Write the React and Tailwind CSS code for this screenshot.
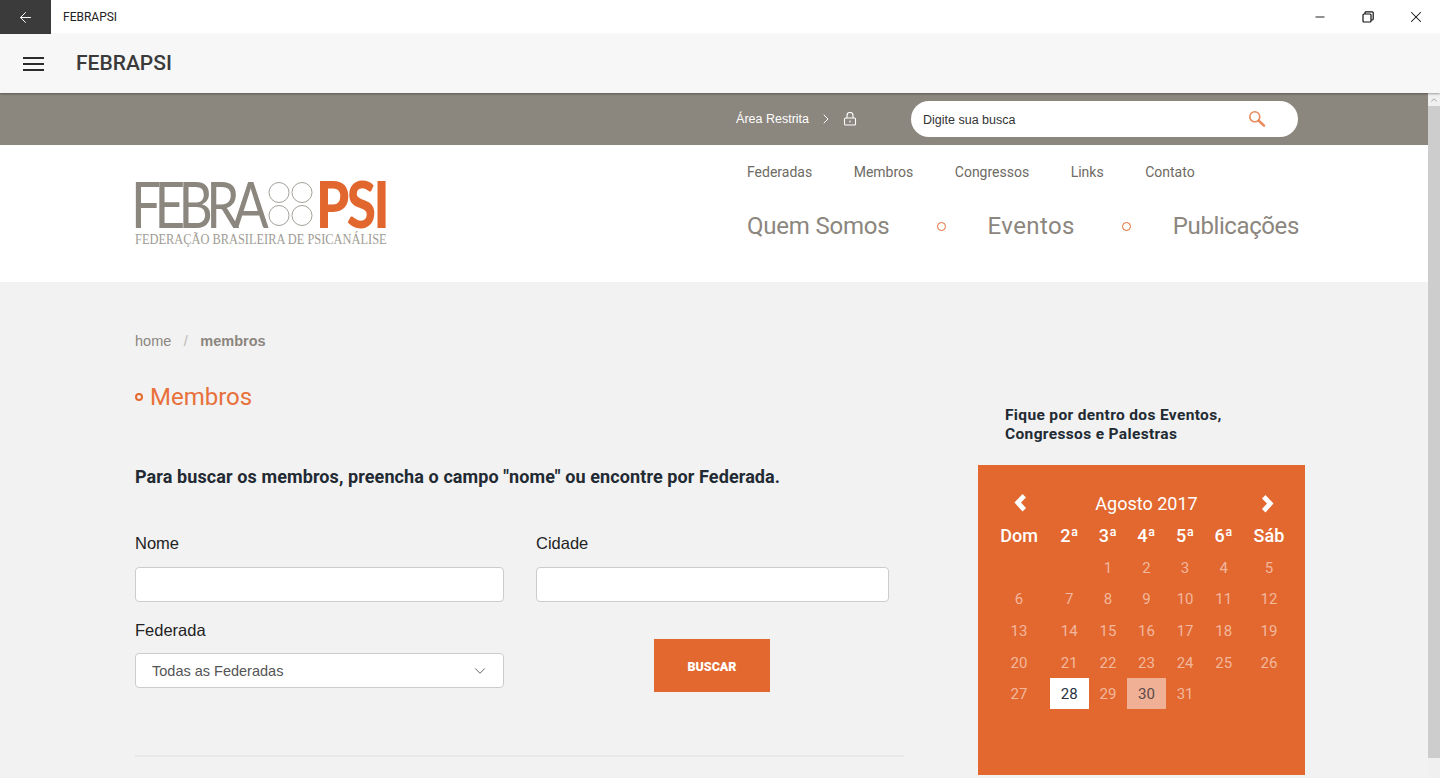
import { ArrowLeft, ChevronDown, ChevronRight, ChevronUp, Minus, X } from "lucide-react";

const titil = "font-['Roboto','Noto_Sans',sans-serif]";
const arial = "font-['Liberation_Sans',Arial,sans-serif]";

const topLinks = ["Federadas", "Membros", "Congressos", "Links", "Contato"];
const weekDays = ["Dom", "2ª", "3ª", "4ª", "5ª", "6ª", "Sáb"];
const weeks = [
    ["", "", 1, 2, 3, 4, 5],
    [6, 7, 8, 9, 10, 11, 12],
    [13, 14, 15, 16, 17, 18, 19],
    [20, 21, 22, 23, 24, 25, 26],
    [27, 28, 29, 30, 31, "", ""],
];

const Dot = ({ className }) => (
    <span className={`inline-block rounded-full border border-[#e56a2f] ${className}`} />
);

const Logo = () => (
    <div className="w-[252px] shrink-0">
        <div className="flex items-center h-[48px]">
            <span className="block w-[133px] font-['Lato',sans-serif] text-[#8b867e] text-[64px] leading-[48px] tracking-[-8px] ml-[-4px] origin-left scale-x-[0.83]">
                FEBRA
            </span>
            <svg width="46" height="46" viewBox="0 0 46 46" className="shrink-0 ml-[4px]">
                <g fill="none" stroke="#a5a19a" strokeWidth="1">
                    <circle cx="11" cy="11.5" r="10" />
                    <circle cx="34" cy="11.5" r="10" />
                    <circle cx="11" cy="34.5" r="10" />
                    <circle cx="34" cy="34.5" r="10" />
                </g>
            </svg>
            <span className="block font-['Lato',sans-serif] text-[#e2672f] text-[64px] leading-[48px] tracking-[-3px] font-black ml-[2px] origin-left scale-x-[0.83]">
                PSI
            </span>
        </div>
        <p className="font-['Liberation_Serif',serif] text-[#a09c95] text-[14px] leading-[14px] mt-[5px] whitespace-nowrap origin-left scale-x-[0.885]">
            FEDERAÇÃO BRASILEIRA DE PSICANÁLISE
        </p>
    </div>
);

const Calendar = () => (
    <div className={`bg-[#e2682f] h-[310px] pl-[10px] pt-[25px] text-white ${titil}`}>
        <div className="grid grid-cols-[62px_38.6px_38.6px_38.6px_38.6px_38.6px_52px]">
            <div className="h-[28px] flex items-center justify-center">
                <svg width="15" height="20" viewBox="0 0 15 20" className="mt-[-2px]"><path d="M10.5 1 L2.5 9.5 L10.5 18.5 L14 15 L9 9.5 L14 4.5 Z" fill="#fff" /></svg>
            </div>
            <div className="col-span-5 text-center text-[18px] leading-[28px]">Agosto 2017</div>
            <div className="h-[28px] flex items-center justify-center">
                <svg width="15" height="20" viewBox="0 0 15 20" className="mt-[-1px]"><path d="M4.5 1 L12.5 9.5 L4.5 18.5 L1 15 L6 9.5 L1 4.5 Z" fill="#fff" /></svg>
            </div>
            {weekDays.map((d) => (
                <div key={d} className="mt-[2px] h-[31px] text-center text-[18px] leading-[32px] font-medium">{d}</div>
            ))}
            {weeks.flat().map((n, i) => (
                <div
                    key={i}
                    className={`h-[31.7px] pt-[2px] flex items-center justify-center text-[15px] ${
                        n === 28 ? "bg-white text-[#2b3340]" : n === 30 ? "bg-[#f0b095] text-[#5a4a48]" : "text-[#f2b79d]"
                    }`}
                >
                    {n}
                </div>
            ))}
        </div>
    </div>
);

const App = () => {
    return (
        <div className="h-screen w-full overflow-hidden flex flex-col bg-white">
            <div className="h-[34px] shrink-0 flex items-center bg-white">
                <div className="w-[51px] h-full bg-[#3b3b3b] flex items-center justify-center">
                    <ArrowLeft className="w-[17px] h-[17px] text-white" strokeWidth={1.4} />
                </div>
                <span className="ml-[12px] text-[12px] text-[#222] font-['Roboto',sans-serif]">FEBRAPSI</span>
                <div className="ml-auto flex items-center h-full text-[#111]">
                    <div className="w-[48px] flex justify-center"><Minus className="w-[14px] h-[14px]" strokeWidth={1.6} /></div>
                    <div className="w-[48px] flex justify-center">
                        <svg width="12" height="12" viewBox="0 0 12 12" fill="none" stroke="#111" strokeWidth="1.2">
                            <rect x="1" y="3" width="8" height="8" rx="1" />
                            <path d="M3 3V1.5A.8.8 0 0 1 3.8.8H10.2A1 1 0 0 1 11.2 1.8V8A1 1 0 0 1 10.4 9H9" />
                        </svg>
                    </div>
                    <div className="w-[48px] flex justify-center"><X className="w-[18px] h-[18px]" strokeWidth={1.4} /></div>
                </div>
            </div>

            <div className="h-[59px] shrink-0 bg-[#f7f7f7] flex items-center shadow-[0_1px_2px_rgba(0,0,0,0.35)] relative z-10">
                <svg width="21" height="14" viewBox="0 0 21 14" className="ml-[23px]" stroke="#2b2b2b" strokeWidth="2">
                    <path d="M0 1H21M0 7H21M0 13H21" />
                </svg>
                <span className="ml-[32px] font-['Roboto',sans-serif] font-medium text-[21px] text-[#3a3a3a]">FEBRAPSI</span>
            </div>

            <div className="flex-1 min-h-0 flex">
                <div className="flex-1 min-w-0 overflow-hidden">
                    <div className="h-[52px] bg-[#8b867e] flex items-center justify-end pr-[130px]">
                        <span className={`text-[12.5px] text-white ${arial}`}>Área Restrita</span>
                        <ChevronRight className="ml-[9px] w-[16px] h-[16px] text-white" strokeWidth={1.5} />
                        <svg width="14" height="14" viewBox="0 0 14 14" fill="none" stroke="#fff" strokeWidth="1.1" className="ml-[9px]">
                            <rect x="1.5" y="6" width="11" height="7" rx="1" />
                            <path d="M4 6V3.5a3 3 0 0 1 6 0V6" />
                            <path d="M7 8.5v2" />
                        </svg>
                        <div className="ml-[54px] w-[387px] h-[36px] bg-white rounded-[18px] flex items-center pl-[12px] pr-[32px] justify-between">
                            <span className={`text-[12.5px] text-[#333] mt-[2px] ${arial}`}>Digite sua busca</span>
                            <svg width="18" height="18" viewBox="0 0 18 18" fill="none">
                                <circle cx="6.8" cy="6.8" r="5" stroke="#e98a5e" strokeWidth="1.6" />
                                <path d="M10.8 10.8L16 15.6" stroke="#e98a5e" strokeWidth="2.6" strokeLinecap="round" />
                            </svg>
                        </div>
                    </div>

                    <div className="h-[137px] bg-white flex items-start pl-[135px]">
                        <div className="mt-[35px]"><Logo /></div>
                        <div className="ml-[360px]">
                            <div className={`flex gap-[41.5px] mt-[18px] text-[14px] leading-[18px] text-[#6e6a64] ${titil}`}>
                                {topLinks.map((l) => <span key={l}>{l}</span>)}
                            </div>
                            <div className={`flex items-center mt-[28px] text-[24px] leading-[34px] text-[#8b867e] whitespace-nowrap ${titil}`}>
                                <span className="tracking-[-0.2px]">Quem Somos</span>
                                <Dot className="w-[9px] h-[9px] ml-[47px] mr-[42px]" />
                                <span className="tracking-[0.4px]">Eventos</span>
                                <Dot className="w-[9px] h-[9px] ml-[47px] mr-[42px]" />
                                <span className="tracking-[-0.4px]">Publicações</span>
                            </div>
                        </div>
                    </div>

                    <div className="bg-[#f2f2f2] h-[600px] pl-[135px] flex items-start">
                        <div className="w-[769px]">
                            <div className={`mt-[50px] text-[14.5px] leading-[18px] flex ${arial}`}>
                                <span className="text-[#8b867e]">home</span>
                                <span className="text-[#bdbab5] mx-[12.5px]">/</span>
                                <span className="text-[#8b867e] font-bold">membros</span>
                            </div>
                            <div className={`flex items-center mt-[29px] ${titil}`}>
                                <Dot className="w-[8px] h-[8px] mr-[7px] border-2" />
                                <h1 className="text-[24px] leading-[36px] text-[#e8703a]">Membros</h1>
                            </div>
                            <p className={`mt-[49px] text-[18px] leading-[26px] font-bold tracking-[0.1px] text-[#222a33] whitespace-nowrap ${titil}`}>
                                Para buscar os membros, preencha o campo "nome" ou encontre por Federada.
                            </p>
                            <div className={`mt-[44px] grid grid-cols-[369px_353px] gap-x-[32px] ${arial}`}>
                                <div>
                                    <label className="block text-[16.5px] leading-[18px] text-[#222]">Nome</label>
                                    <input className="mt-[15px] block w-full h-[35px] bg-white border border-[#ccc] rounded-[4px]" />
                                </div>
                                <div>
                                    <label className="block text-[16.5px] leading-[18px] text-[#222]">Cidade</label>
                                    <input className="mt-[15px] block w-full h-[35px] bg-white border border-[#ccc] rounded-[4px]" />
                                </div>
                                <div className="mt-[19px]">
                                    <label className="block text-[16.5px] leading-[18px] text-[#222]">Federada</label>
                                    <div className="mt-[14px] h-[35px] bg-white border border-[#ccc] rounded-[4px] flex items-center justify-between pl-[16px] pr-[14px] text-[14.5px] text-[#555]">
                                        <span className="mt-[2px]">Todas as Federadas</span>
                                        <ChevronDown className="w-[18px] h-[18px] text-[#555]" strokeWidth={1.2} />
                                    </div>
                                </div>
                                <div className="mt-[37px] pl-[118px]">
                                    <button className={`block w-[116px] h-[53px] pt-[4px] bg-[#e2682f] text-white text-[12.5px] font-black ${titil}`}>BUSCAR</button>
                                </div>
                            </div>
                            <div className="mt-[63px] h-[2px] bg-[#e8e8e8]" />
                        </div>

                        <div className="ml-[74px] w-[327px]">
                            <p className={`mt-[124px] ml-[27px] text-[15.5px] leading-[19px] font-bold tracking-[0.35px] text-[#222a33] ${titil}`}>
                                Fique por dentro dos Eventos,<br />Congressos e Palestras
                            </p>
                            <div className="mt-[21px]"><Calendar /></div>
                        </div>
                    </div>
                </div>

                <div className="w-[12px] shrink-0 bg-[#f0f0f0] flex flex-col">
                    <div className="h-[13px] flex items-center justify-center">
                        <ChevronUp className="w-[10px] h-[10px] text-[#999]" strokeWidth={2} />
                    </div>
                    <div className="flex-1 bg-[#cdcdcd] mb-[20px]" />
                </div>
            </div>
        </div>
    );
};

export default App;
